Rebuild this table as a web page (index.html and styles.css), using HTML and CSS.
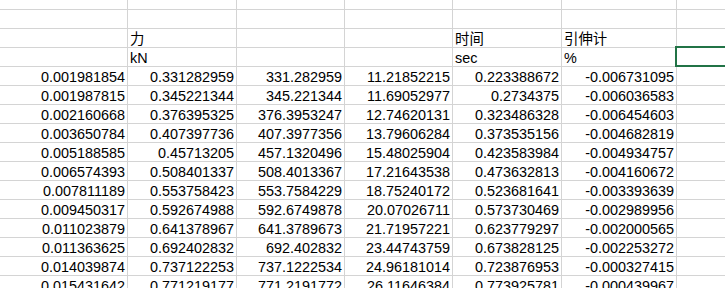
FILE: index.html
```html
<!DOCTYPE html>
<html lang="zh">
<head>
<meta charset="utf-8">
<title>Sheet</title>
<link rel="stylesheet" href="styles.css">
</head>
<body>
<div class="sheet">
  <div class="c"></div><div class="c"></div><div class="c"></div><div class="c"></div><div class="c"></div><div class="c"></div><div class="c"></div>
  <div class="c"></div><div class="c"></div><div class="c"></div><div class="c"></div><div class="c"></div><div class="c"></div><div class="c"></div>
  <div class="c"></div><div class="c t">力</div><div class="c"></div><div class="c"></div><div class="c t">时间</div><div class="c t">引伸计</div><div class="c"></div>
  <div class="c"></div><div class="c t">kN</div><div class="c"></div><div class="c"></div><div class="c t">sec</div><div class="c t">%</div><div class="c sel"></div>

  <div class="c n">0.001981854</div><div class="c n">0.331282959</div><div class="c n">331.282959</div><div class="c n">11.21852215</div><div class="c n">0.223388672</div><div class="c n">-0.006731095</div><div class="c"></div>
  <div class="c n">0.001987815</div><div class="c n">0.345221344</div><div class="c n">345.221344</div><div class="c n">11.69052977</div><div class="c n">0.2734375</div><div class="c n">-0.006036583</div><div class="c"></div>
  <div class="c n">0.002160668</div><div class="c n">0.376395325</div><div class="c n">376.3953247</div><div class="c n">12.74620131</div><div class="c n">0.323486328</div><div class="c n">-0.006454603</div><div class="c"></div>
  <div class="c n">0.003650784</div><div class="c n">0.407397736</div><div class="c n">407.3977356</div><div class="c n">13.79606284</div><div class="c n">0.373535156</div><div class="c n">-0.004682819</div><div class="c"></div>
  <div class="c n">0.005188585</div><div class="c n">0.45713205</div><div class="c n">457.1320496</div><div class="c n">15.48025904</div><div class="c n">0.423583984</div><div class="c n">-0.004934757</div><div class="c"></div>
  <div class="c n">0.006574393</div><div class="c n">0.508401337</div><div class="c n">508.4013367</div><div class="c n">17.21643538</div><div class="c n">0.473632813</div><div class="c n">-0.004160672</div><div class="c"></div>
  <div class="c n">0.007811189</div><div class="c n">0.553758423</div><div class="c n">553.7584229</div><div class="c n">18.75240172</div><div class="c n">0.523681641</div><div class="c n">-0.003393639</div><div class="c"></div>
  <div class="c n">0.009450317</div><div class="c n">0.592674988</div><div class="c n">592.6749878</div><div class="c n">20.07026711</div><div class="c n">0.573730469</div><div class="c n">-0.002989956</div><div class="c"></div>
  <div class="c n">0.011023879</div><div class="c n">0.641378967</div><div class="c n">641.3789673</div><div class="c n">21.71957221</div><div class="c n">0.623779297</div><div class="c n">-0.002000565</div><div class="c"></div>
  <div class="c n">0.011363625</div><div class="c n">0.692402832</div><div class="c n">692.402832</div><div class="c n">23.44743759</div><div class="c n">0.673828125</div><div class="c n">-0.002253272</div><div class="c"></div>
  <div class="c n">0.014039874</div><div class="c n">0.737122253</div><div class="c n">737.1222534</div><div class="c n">24.96181014</div><div class="c n">0.723876953</div><div class="c n">-0.000327415</div><div class="c"></div>
  <div class="c n">0.015431642</div><div class="c n">0.771219177</div><div class="c n">771.2191772</div><div class="c n">26.11646384</div><div class="c n">0.773925781</div><div class="c n">-0.000439967</div><div class="c"></div>
</div>
</body>
</html>
```

FILE: styles.css
```css
html, body {
  margin: 0;
  padding: 0;
  background: #ffffff;
  overflow: hidden;
}

body {
  width: 725px;
  height: 288px;
}

.sheet {
  display: grid;
  grid-template-columns: 128px 109px 108px 108px 109px 115px 100px;
  grid-auto-rows: 19px;
  width: max-content;
  margin-top: -9px;
  font-family: "Liberation Sans", "Noto Sans CJK SC", sans-serif;
  font-size: 14.4px;
  color: #000000;
}

.c {
  box-sizing: border-box;
  border-right: 1px solid #d4d4d4;
  border-bottom: 1px solid #d4d4d4;
  line-height: 20px;
  white-space: nowrap;
  overflow: visible;
}

.n {
  text-align: right;
  padding-right: 2px;
}

.t {
  text-align: left;
  padding-left: 2px;
}

.sel {
  position: relative;
}

.sel::after {
  content: "";
  position: absolute;
  left: -2px;
  top: -2px;
  right: -10px;
  bottom: -1px;
  border: 2px solid #217346;
}
```
